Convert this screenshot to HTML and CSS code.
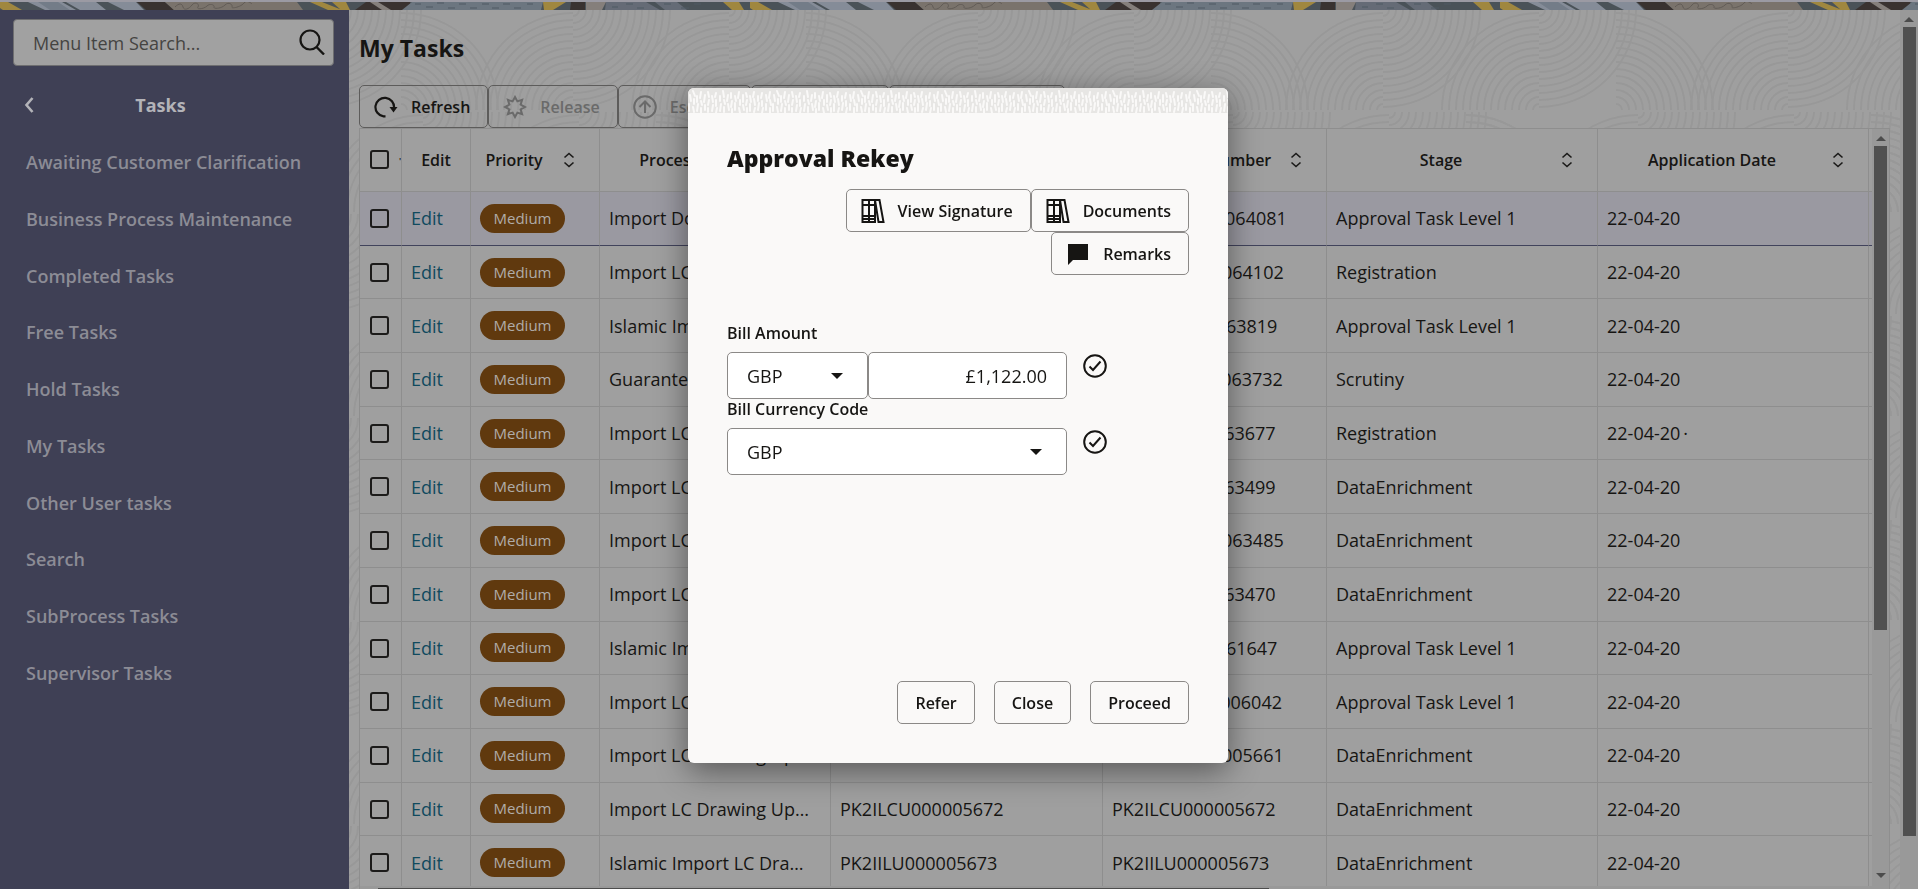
FILE: index.html
```html
<!DOCTYPE html>
<html lang="en">
<head>
<meta charset="utf-8">
<title>My Tasks</title>
<link rel="stylesheet" href="styles.css">
</head>
<body>
<svg class="defs" aria-hidden="true">
  <symbol id="sort" viewBox="0 0 12 16"><path d="M1.500 5.500 6 1.500l4.500 4M1.500 10.500 6 14.500l4.500-4" fill="none" stroke="#1b1a19" stroke-width="1.600"/></symbol>
  <symbol id="caret" viewBox="0 0 12 6"><path d="M0 0h12L6 6z" fill="#161513"/></symbol>
  <symbol id="ok" viewBox="0 0 24 24"><circle cx="12" cy="12" r="10.800" fill="none" stroke="#161513" stroke-width="2"/><path d="M6.500 12.500 10 16l7.500-8.500" fill="none" stroke="#161513" stroke-width="2"/></symbol>
  <symbol id="books" viewBox="0 0 24 24"><path d="M1.500 1h6.500v22H1.500zM8 1h6v22H8zM1.500 6H14M1.500 17H14M1.500 20H14M14 1h4.500l4 22H17.500z" fill="none" stroke="#161513" stroke-width="2"/></symbol>
</svg>

<svg class="banner" aria-hidden="true">
  <defs>
    <pattern id="strip" width="750" height="8" patternUnits="userSpaceOnUse">
      <rect width="750" height="8" fill="#4a5258"/>
      <path d="M0 0h8l14 8H3L0 6zM310 0h12l20 8h-14zM332 0h14l4 8h-9zM543 0h23l-13 8h-9zM723 0h16l5 8h-12z" fill="#a0873f"/>
      <path d="M28 0h34l14 8H45zM66 0h30l10 8H80zM108 0h28l8 8h-20z" fill="#858c98"/>
      <path d="M38 0h20l12 8H50z" fill="#737c88"/>
      <path d="M137 0h28l9 8h-28zM366 0h44l2 8h-57zM571 0h14v8h-15z" fill="#393230"/>
      <path d="M165 0h132l6 8H174z" fill="#7a736c"/>
      <path d="M370 0h8l13 8h-9zM586 0h20l-4 8h-16z" fill="#857f7b"/>
      <path d="M412 0h131l-2 8H402z" fill="#6c7680"/>
      <path d="M606 0h40l14 8h-55zM655 0h22l10 8h-22z" fill="#656b76"/>
      <path d="M175 5c4-4 7-4 8 0s6 2 9-2 8-1 6 2 6 2 9-1 8-1 7 1 7 2 11-2 8 0 7 2 9 0 12-4 8 1 8 1 12-1" stroke="#605a55" fill="none"/>
      <path d="M415 2h6m5 3h7m4-4h7m4 5h7m4-4h7m4 4h7m5-4h7m3 4h7m4-4h7m4 4h7m6-4h6M612 5h6m8-3h7m4 4h7m20-4h7m10 4h8m5-4h7" stroke="#4d5862"/>
    </pattern>
  </defs>
  <rect width="100%" height="8" fill="url(#strip)"/>
</svg>

<div class="app">
  <nav class="side" aria-label="Tasks">
    <div class="search">
      <input type="search" aria-label="Menu Item Search" placeholder="Menu Item Search...">
      <svg width="26" height="26" viewBox="0 0 26 26"><circle cx="11" cy="11" r="9.500" fill="none" stroke="#161513" stroke-width="2.200"/><path d="m17.500 18 7.500 7.500" stroke="#161513" stroke-width="2.400"/></svg>
    </div>
    <div class="side-head">
      <button type="button" aria-label="Back"><svg width="10" height="16" viewBox="0 0 10 16"><path d="M8.500 1 2.500 8l6 7" fill="none" stroke="#b3b3b8" stroke-width="2.600"/></svg></button>
      <h2>Tasks</h2>
    </div>
    <ul>
      <li><a href="#">Awaiting Customer Clarification</a></li>
      <li><a href="#">Business Process Maintenance</a></li>
      <li><a href="#">Completed Tasks</a></li>
      <li><a href="#">Free Tasks</a></li>
      <li><a href="#">Hold Tasks</a></li>
      <li><a href="#">My Tasks</a></li>
      <li><a href="#">Other User tasks</a></li>
      <li><a href="#">Search</a></li>
      <li><a href="#">SubProcess Tasks</a></li>
      <li><a href="#">Supervisor Tasks</a></li>
    </ul>
  </nav>

  <main>
    <svg class="waves" aria-hidden="true">
      <defs>
        <g id="rings" fill="none" stroke="#989898" stroke-width="2">
          <circle r="6"/><circle r="13"/><circle r="20"/><circle r="27"/><circle r="34"/><circle r="41"/><circle r="48"/><circle r="55"/><circle r="62"/><circle r="69"/><circle r="76"/><circle r="83"/><circle r="90"/><circle r="97"/>
        </g>
        <clipPath id="br"><rect width="100" height="100"/></clipPath>
        <clipPath id="tl"><rect x="-100" y="-100" width="100" height="100"/></clipPath>
        <clipPath id="tr"><rect y="-100" width="100" height="100"/></clipPath>
        <g id="fan-br" clip-path="url(#br)"><use href="#rings"/></g>
        <g id="fan-tl" clip-path="url(#tl)"><use href="#rings"/></g>
        <g id="fan-tr" clip-path="url(#tr)"><use href="#rings"/></g>
        <g id="row">
          <use href="#fan-tl" x="100" y="100"/><use href="#fan-br" x="100"/>
          <use href="#fan-tl" x="256" y="100"/><use href="#fan-br" x="256"/>
          <use href="#fan-tr" x="333" y="100"/><use href="#fan-tr" x="-72" y="100"/>
        </g>
        <pattern id="wave" x="124" width="405" height="204" patternUnits="userSpaceOnUse">
          <use href="#row"/><use href="#row" x="-150" y="102"/><use href="#row" x="255" y="102"/>
        </pattern>
      </defs>
      <rect width="100%" height="100%" fill="url(#wave)"/>
    </svg>
    <div class="content">
      <h1>My Tasks</h1>
      <div class="tools">
        <button type="button" class="btn"><svg width="24" height="24" viewBox="0 0 24 24"><path d="M11.500 21.300H9.500A9.300 9.300 0 1 1 20 13" fill="none" stroke="#161513" stroke-width="2.200"/><path d="M15.500 12h8l-4 5.500z" fill="#161513"/></svg>Refresh</button>
        <button type="button" class="btn" disabled><svg width="24" height="24" viewBox="0 0 24 24"><path d="m12 2 2.400 4.400 4.700-1.500-1.500 4.700L22 12l-4.400 2.400 1.500 4.700-4.700-1.500L12 22l-2.400-4.400-4.700 1.500 1.500-4.700L2 12l4.400-2.400-1.500-4.700 4.700 1.500z" fill="none" stroke="#6a6a6a" stroke-width="2"/></svg>Release</button>
        <button type="button" class="btn" disabled><svg width="24" height="24" viewBox="0 0 24 24"><circle cx="12" cy="12" r="10.800" fill="none" stroke="#6a6a6a" stroke-width="2"/><path d="M12 18V7M6.500 12 12 6.500l5.500 5.500" fill="none" stroke="#6a6a6a" stroke-width="2"/></svg>Escalate</button>
        <button type="button" class="btn" disabled><svg width="24" height="24" viewBox="0 0 24 24"><circle cx="12" cy="8" r="5" fill="none" stroke="#6a6a6a" stroke-width="2"/></svg>Delegate</button>
        <button type="button" class="btn" disabled><svg width="24" height="24" viewBox="0 0 24 24"><path d="M3 5h18v14H3z" fill="none" stroke="#6a6a6a" stroke-width="2"/></svg>Flow Diagram</button>
      </div>
      <div class="grid">
        <div class="grid-body">
          <table>
            <colgroup><col class="c-check"><col class="c-edit"><col class="c-prio"><col class="c-name"><col class="c-ref"><col class="c-app"><col class="c-stage"><col class="c-date"><col></colgroup>
            <thead><tr>
              <th><input type="checkbox" aria-label="Select all"><span class="cut">'</span></th>
              <th>Edit</th>
              <th><div class="head"><span>Priority</span><svg><use href="#sort"/></svg></div></th>
              <th><div class="head"><span>Process Name</span><svg><use href="#sort"/></svg></div></th>
              <th><div class="head"><span>Process Reference Number</span><svg><use href="#sort"/></svg></div></th>
              <th><div class="head"><span>Application Number</span><svg><use href="#sort"/></svg></div></th>
              <th><div class="head"><span>Stage</span><svg><use href="#sort"/></svg></div></th>
              <th><div class="head"><span>Application Date</span><svg><use href="#sort"/></svg></div></th>
              <th></th>
            </tr></thead>
            <tbody>
              <tr class="on"><td><input type="checkbox" aria-label="Select row 1"></td><td><a href="#">Edit</a></td><td><span class="badge">Medium</span></td><td>Import Documentary Collection</td><td>PK2ODCB000064081</td><td>PK2ODCB000064081</td><td>Approval Task Level 1</td><td>22-04-20</td><td></td></tr>
              <tr><td><input type="checkbox" aria-label="Select row 2"></td><td><a href="#">Edit</a></td><td><span class="badge">Medium</span></td><td>Import LC Issuance</td><td>PK2GLCU000064102</td><td>PK2GLCU000064102</td><td>Registration</td><td>22-04-20</td><td></td></tr>
              <tr><td><input type="checkbox" aria-label="Select row 3"></td><td><a href="#">Edit</a></td><td><span class="badge">Medium</span></td><td>Islamic Import LC Issuance</td><td>PK2IGLU000063819</td><td>PK2IGLU000063819</td><td>Approval Task Level 1</td><td>22-04-20</td><td></td></tr>
              <tr><td><input type="checkbox" aria-label="Select row 4"></td><td><a href="#">Edit</a></td><td><span class="badge">Medium</span></td><td>Guarantee Issuance</td><td>PK2GTEU000063732</td><td>PK2GTEU000063732</td><td>Scrutiny</td><td>22-04-20</td><td></td></tr>
              <tr><td><input type="checkbox" aria-label="Select row 5"></td><td><a href="#">Edit</a></td><td><span class="badge">Medium</span></td><td>Import LC Issuance</td><td>PK2ILCU000063677</td><td>PK2ILCU000063677</td><td>Registration</td><td>22-04-20&thinsp;·</td><td></td></tr>
              <tr><td><input type="checkbox" aria-label="Select row 6"></td><td><a href="#">Edit</a></td><td><span class="badge">Medium</span></td><td>Import LC Issuance</td><td>PK2ILCU000063499</td><td>PK2ILCU000063499</td><td>DataEnrichment</td><td>22-04-20</td><td></td></tr>
              <tr><td><input type="checkbox" aria-label="Select row 7"></td><td><a href="#">Edit</a></td><td><span class="badge">Medium</span></td><td>Import LC Drawing Update</td><td>PK2GLCU000063485</td><td>PK2GLCU000063485</td><td>DataEnrichment</td><td>22-04-20</td><td></td></tr>
              <tr><td><input type="checkbox" aria-label="Select row 8"></td><td><a href="#">Edit</a></td><td><span class="badge">Medium</span></td><td>Import LC Issuance</td><td>PK2ILCU000063470</td><td>PK2ILCU000063470</td><td>DataEnrichment</td><td>22-04-20</td><td></td></tr>
              <tr><td><input type="checkbox" aria-label="Select row 9"></td><td><a href="#">Edit</a></td><td><span class="badge">Medium</span></td><td>Islamic Import LC Issuance</td><td>PK2IGLU000061647</td><td>PK2IGLU000061647</td><td>Approval Task Level 1</td><td>22-04-20</td><td></td></tr>
              <tr><td><input type="checkbox" aria-label="Select row 10"></td><td><a href="#">Edit</a></td><td><span class="badge">Medium</span></td><td>Import LC Amendment</td><td>PK2GLCA000006042</td><td>PK2GLCA000006042</td><td>Approval Task Level 1</td><td>22-04-20</td><td></td></tr>
              <tr><td><input type="checkbox" aria-label="Select row 11"></td><td><a href="#">Edit</a></td><td><span class="badge">Medium</span></td><td>Import LC Drawing Update</td><td>PK2GLCU000005661</td><td>PK2GLCU000005661</td><td>DataEnrichment</td><td>22-04-20</td><td></td></tr>
              <tr><td><input type="checkbox" aria-label="Select row 12"></td><td><a href="#">Edit</a></td><td><span class="badge">Medium</span></td><td>Import LC Drawing Update</td><td>PK2ILCU000005672</td><td>PK2ILCU000005672</td><td>DataEnrichment</td><td>22-04-20</td><td></td></tr>
              <tr><td><input type="checkbox" aria-label="Select row 13"></td><td><a href="#">Edit</a></td><td><span class="badge">Medium</span></td><td>Islamic Import LC Drawing</td><td>PK2IILU000005673</td><td>PK2IILU000005673</td><td>DataEnrichment</td><td>22-04-20</td><td></td></tr>
            </tbody>
          </table>
        </div>
        <div class="bar inner"><i class="up"></i><i class="thumb"></i><i class="down"></i></div>
        <div class="hbar"><i></i></div>
      </div>
    </div>
    <div class="bar outer"><i class="up"></i><i class="thumb"></i></div>
  </main>
</div>

<div class="overlay">
  <section class="dialog" role="dialog" aria-labelledby="dlg-title">
    <svg class="trim" aria-hidden="true">
      <defs><pattern id="weave" width="84" height="25" patternUnits="userSpaceOnUse">
        <rect width="84" height="25" fill="#e7e6e4"/>
        <path d="M2 7l1 6M1 16v7M5 3l2 5M6 11v5M5 19l1 5M9 8v6M10 16l-1 7M13 4l-1 6M13 13l1 4M13 20v5M17 7l-1 7M17 17v5M20 4l1 5M21 12l-1 5M20 20v4M24 8l1 6M25 17l-1 6M28 5l-1 4M28 12v6M29 20l-1 5M32 8v5M33 16l-1 7M35 3l1 6M36 12l1 4M36 19v5M40 7l-1 6M40 16l1 6M43 5v5M44 13l-1 6M44 21v4M47 8l1 5M47 15v7M51 4l-1 6M52 12v5M51 20l1 5M55 7v7M55 17l1 5M58 5l1 4M59 12l-1 5M59 20v4M62 8l1 6M62 16v7M66 4l-1 5M66 11l1 6M67 20l-1 4M70 8v5M71 15l-1 7M74 5l-1 5M74 13v5M75 20l-1 5M78 7l1 6M78 16v6M82 4l-1 6M82 12l1 5M82 20v5" stroke="#faf9f8" stroke-width="2" stroke-linecap="round"/>
      </pattern></defs>
      <rect width="100%" height="25" fill="url(#weave)"/>
    </svg>
    <h2 id="dlg-title">Approval Rekey</h2>
    <div class="actions">
      <button type="button" class="btn"><svg width="24" height="24"><use href="#books"/></svg>View Signature</button>
      <button type="button" class="btn"><svg width="24" height="24"><use href="#books"/></svg>Documents</button>
      <button type="button" class="btn"><svg width="24" height="24" viewBox="0 0 24 24"><path d="M2 2h20v16H7l-5 5z" fill="#161513"/></svg>Remarks</button>
    </div>
    <form class="fields">
      <label for="amount">Bill Amount</label>
      <div class="field">
        <div class="controls">
          <div class="pick small"><select aria-label="Bill Amount currency"><option>GBP</option></select><svg><use href="#caret"/></svg></div>
          <input id="amount" type="text" value="£1,122.00">
        </div>
        <svg class="ok"><use href="#ok"/></svg>
      </div>
      <label for="code">Bill Currency Code</label>
      <div class="field">
        <div class="controls">
          <div class="pick"><select id="code"><option>GBP</option></select><svg><use href="#caret"/></svg></div>
        </div>
        <svg class="ok"><use href="#ok"/></svg>
      </div>
    </form>
    <footer>
      <button type="button" class="btn">Refer</button>
      <button type="button" class="btn">Close</button>
      <button type="button" class="btn">Proceed</button>
    </footer>
  </section>
</div>
</body>
</html>
```
FILE: styles.css
```css
* { box-sizing: border-box; }
body {
  margin: 0;
  height: 100vh;
  overflow: hidden;
  display: flex;
  flex-direction: column;
  background: #9b9aa3;
  color: #161513;
  font-family: "Open Sans", "Noto Sans", sans-serif;
  font-size: 18px;
}
button, input, select { font: inherit; color: inherit; }
h1, h2, ul { margin: 0; padding: 0; }
a { text-decoration: none; }
.defs { position: absolute; width: 0; height: 0; }
.banner { display: block; width: 100%; height: 8px; margin-top: 2px; flex: none; }
.app { flex: 1; min-height: 0; display: flex; }

.side { width: 349px; flex: none; background: #3f4055; padding: 9px 15px 0 13px; }
.search { display: grid; align-items: center; }
.search > * { grid-area: 1 / 1; }
.search input {
  width: 100%; height: 47px; padding: 0 50px 0 19px;
  background: #a1a1a1; border: 1px solid #6e6e70; border-radius: 4px;
}
.search input::placeholder { color: #454442; opacity: 1; }
.search svg { justify-self: end; margin-right: 9px; margin-bottom: 2px; pointer-events: none; }
.side-head { display: grid; align-items: center; height: 68px; margin-top: 5px; }
.side-head > * { grid-area: 1 / 1; }
.side-head button { z-index: 1; justify-self: start; display: flex; margin-left: 11px; padding: 0; border: 0; background: none; }
.side-head h2 { margin-right: 26px; text-align: center; font-size: 18px; font-weight: 700; color: #b3b3b8; }
.side ul { list-style: none; height: 567px; margin-top: -5px; display: grid; grid-auto-rows: 1fr; align-items: center; }
.side a { padding-left: 13px; color: #8c8c95; font-weight: 600; }

main { position: relative; flex: 1; min-width: 0; display: flex; background: #9f9f9f; }
.waves { position: absolute; inset: 0; width: 100%; height: 100%; }
.content { position: relative; flex: 1; min-width: 0; padding: 0 10px; display: flex; flex-direction: column; }
h1 { height: 75px; line-height: 76px; font-size: 23px; font-weight: 700; }
.tools { display: flex; }
.btn {
  display: inline-flex; align-items: center; gap: 13px;
  height: 43px; padding: 0 17px; border: 1px solid #8b8987; border-radius: 5px;
  background: transparent; font-size: 16px; font-weight: 600; white-space: nowrap;
}
.btn:has(svg) { padding-left: 14px; }
.tools .btn { border-color: #5d5c5b; }
.btn:disabled { color: #6a6a6a; }

.grid {
  flex: 1; min-height: 0; display: grid;
  grid-template: minmax(0, 1fr) 3px / minmax(0, 1fr) 17px;
  background: #9f9f9f; border: 1px solid #8e8e8e; border-bottom: 0;
}
.grid-body { overflow: hidden; }
table { width: 100%; height: 761px; table-layout: fixed; border-collapse: separate; border-spacing: 0; }
.c-check { width: 42px; }
.c-edit { width: 69px; }
.c-prio { width: 129px; }
.c-name { width: 231px; }
.c-ref { width: 272px; }
.c-stage, .c-date { width: 271px; }
.c-app { width: 224px; }
th, td { padding: 0 0 0 9px; border: 0 solid #8e8e8e; border-width: 0 1px 1px 0; text-align: left; white-space: nowrap; }
th:last-child, td:last-child { border-right: 0; padding: 0; }
th { height: 63px; font-size: 16px; font-weight: 600; }
th:nth-child(2) { padding: 0; text-align: center; }
td { overflow: hidden; text-overflow: ellipsis; padding-right: 18px; }
th:first-child, td:first-child { padding: 0 0 4px 10px; text-overflow: clip; overflow: hidden; }
td a { color: #104a5e; }
.on td { background: #9a99a1; border-bottom-color: #41435c; }
input[type="checkbox"] { appearance: none; width: 19px; height: 19px; margin: 0; border: 2px solid #1c1b1a; border-radius: 3px; vertical-align: middle; }
.cut { margin-left: 10px; font-size: 9px; }
.head { display: flex; align-items: center; }
.head span { flex: 1; text-align: center; }
.head svg { flex: none; width: 12px; height: 16px; margin: 0 24px 0 15px; }
.badge {
  display: inline-block; width: 85px; height: 29px; line-height: 29px; border-radius: 15px;
  background: #60390e; color: #b0aca8; font-size: 15px; text-align: center; vertical-align: middle;
}

.bar { display: flex; flex-direction: column; align-items: center; background: #999; }
.bar i { display: block; }
.up, .down { border: 5px solid transparent; }
.up { border-top: 0; border-bottom: 5px solid #4c4c4c; }
.down { border-bottom: 0; border-top: 5px solid #4c4c4c; margin-top: auto; margin-bottom: 8px; }
.thumb { background: #505050; }
.inner .up, .outer .up { margin: 7px 0 5px; }
.inner .thumb { width: 13px; height: 64%; }
.outer { position: relative; width: 18px; flex: none; }
.outer .thumb { width: 13px; height: 92%; }
.hbar { grid-column: 1 / -1; background: #999; padding: 2px 0 0 18px; }
.hbar i { display: block; width: 59%; height: 1px; background: #4c4c4c; }

.overlay { position: fixed; inset: 0; display: flex; justify-content: center; align-items: flex-start; padding: 88px 2px 0 0; }
.dialog {
  width: 540px; height: 675px; padding: 0 39px; display: flex; flex-direction: column;
  background: #faf9f8; border-radius: 6px; overflow: hidden;
  box-shadow: 0 8px 32px rgba(0, 0, 0, .45);
}
.trim { flex: none; display: block; width: 540px; height: 25px; margin: 0 -39px; }
.dialog h2 { margin-top: 29px; line-height: 32px; font-size: 23px; font-weight: 800; }
.actions { display: flex; flex-wrap: wrap; justify-content: flex-end; margin: 15px 0 47px; }
.fields label { display: block; line-height: 22px; padding-bottom: 8px; font-size: 16px; font-weight: 600; }
.field { display: flex; gap: 16px; }
.field + label { line-height: 21px; }
.controls { width: 340px; display: flex; }
.pick { flex: 1; display: grid; align-items: center; }
.pick > * { grid-area: 1 / 1; }
.pick svg { justify-self: end; width: 12px; height: 6px; margin-right: 25px; pointer-events: none; }
.small { flex: none; width: 141px; }
.pick select, .controls input {
  appearance: none; width: 100%; min-width: 0; height: 47px; padding: 0 19px;
  background: #fff; border: 1px solid #8b8987; border-radius: 5px;
}
.controls input { flex: 1; text-align: right; }
.ok { width: 24px; height: 24px; margin-top: 2px; }
.dialog footer { margin-top: auto; margin-bottom: 39px; display: flex; justify-content: flex-end; gap: 19px; }
```
